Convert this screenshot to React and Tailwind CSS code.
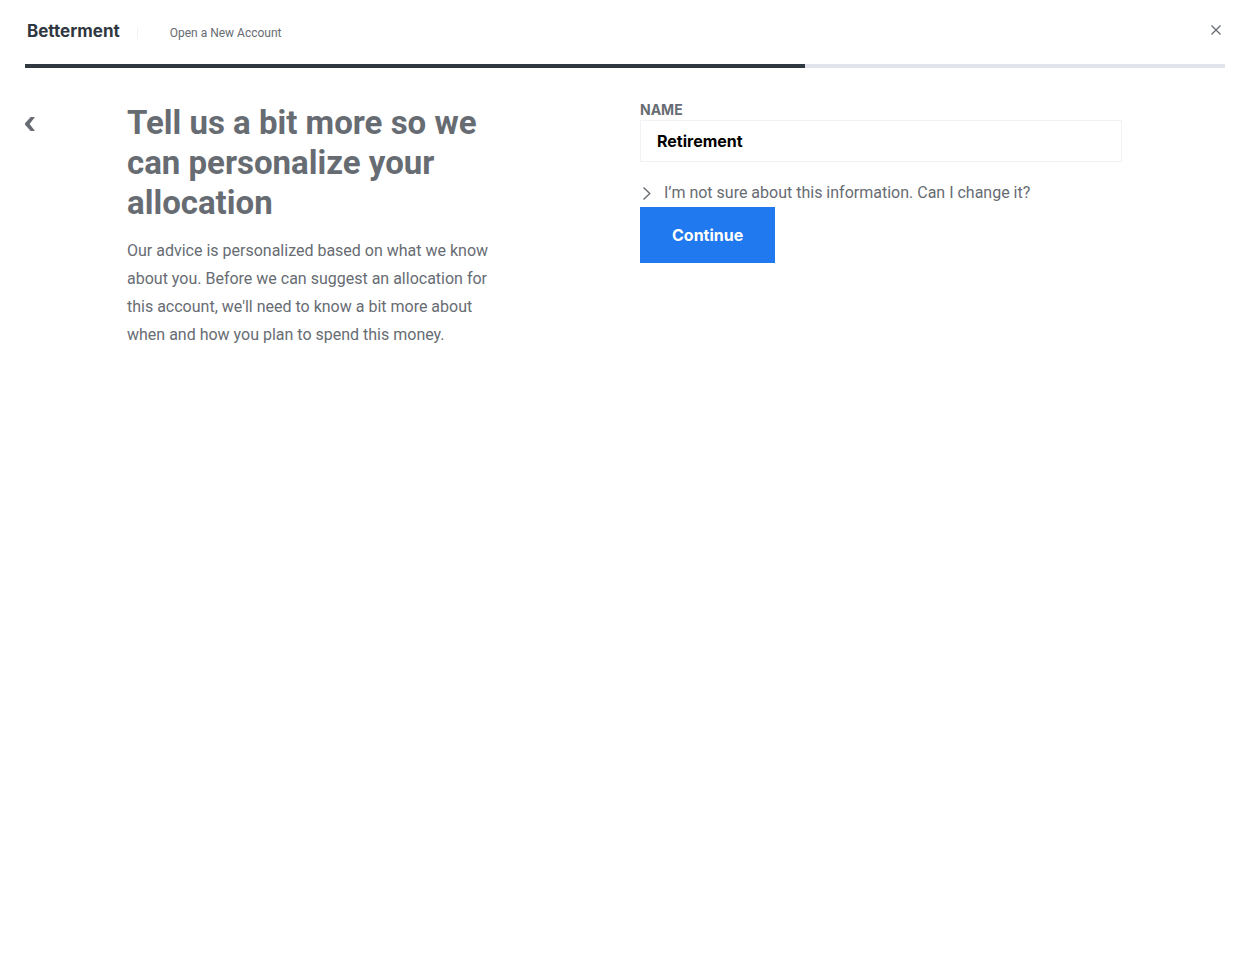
import { useState } from "react";

const PROGRESS = 65;

function Header() {
  return (
    <header>
      <div className="flex h-16 items-center pb-0.5">
        <a
          href="#home"
          className="flex h-5 items-center pr-[17px] pl-0.5 font-['Inter',sans-serif] text-[17px] leading-5 font-bold text-[#2f3740]"
        >
          Betterment
        </a>
        <span className="mt-1 flex h-3 items-center border-l border-[#f1f2f5] pl-8 text-xs leading-3">
          Open a New Account
        </span>
        <button type="button" aria-label="Close" className="mb-0.5 ml-auto p-1">
          <svg viewBox="0 0 10 10" className="h-2.5 w-2.5" fill="none" stroke="currentColor" strokeWidth="1.3">
            <path d="M0.5 0.5 9.5 9.5M9.5 0.5 0.5 9.5" />
          </svg>
        </button>
      </div>
      <div
        role="progressbar"
        aria-label="Account setup"
        aria-valuenow={PROGRESS}
        aria-valuemin={0}
        aria-valuemax={100}
        className="h-1 bg-[#e1e4ed]"
      >
        <div className="h-full bg-[#2f3740]" style={{ width: `${PROGRESS}%` }} />
      </div>
    </header>
  );
}

function Intro() {
  return (
    <section className="max-w-96">
      <h1 className="text-[33px] leading-10 font-bold">
        Tell us a bit more so we can personalize your allocation
      </h1>
      <p className="mt-3.5 leading-7">
        Our advice is personalized based on what we know about you. Before we can suggest an
        allocation for this account, we'll need to know a bit more about when and how you plan to
        spend this money.
      </p>
    </section>
  );
}

function AccountForm() {
  const [name, setName] = useState("Retirement");
  return (
    <form className="flex flex-col items-start" onSubmit={(e) => e.preventDefault()}>
      <label
        htmlFor="account-name"
        className="font-['Inter',sans-serif] text-sm leading-5 font-bold uppercase"
      >
        Name
      </label>
      <input
        id="account-name"
        type="text"
        value={name}
        onChange={(e) => setName(e.target.value)}
        className="h-[42px] w-full border border-[#f1f2f5] px-4 font-['Inter',sans-serif] font-bold text-black"
      />
      <button type="button" aria-expanded="false" className="mt-[19px] flex h-6 items-center gap-3">
        <svg viewBox="0 0 12 14" className="h-3.5 w-3" fill="none" stroke="currentColor" strokeWidth="1.4">
          <path d="M3.5 1.5 9.8 7.5 3.5 13.5" />
        </svg>
        I’m not sure about this information. Can I change it?
      </button>
      <button
        type="submit"
        className="mt-0.5 h-14 bg-[#2079ee] px-8 font-['Inter',sans-serif] font-bold text-white"
      >
        Continue
      </button>
    </form>
  );
}

export default function App() {
  return (
    <div className="min-h-screen bg-white pr-[31px] pl-[25px] font-['Roboto','Liberation_Sans',sans-serif] text-[#676c73]">
      <Header />
      <main className="flex pt-8 pr-[103px]">
        <div className="w-[102px] shrink-0 pt-[17px]">
          <button type="button" aria-label="Back" className="block">
            <svg viewBox="0 0 10 14" className="h-3.5 w-2.5" fill="currentColor">
              <path d="M5.7 0H10L4.6 7 10 14H5.7L0 7.8V6.2Z" />
            </svg>
          </button>
        </div>
        <div className="grid flex-1 grid-cols-2 gap-[31px]">
          <div className="pt-[3px]">
            <Intro />
          </div>
          <AccountForm />
        </div>
      </main>
    </div>
  );
}
